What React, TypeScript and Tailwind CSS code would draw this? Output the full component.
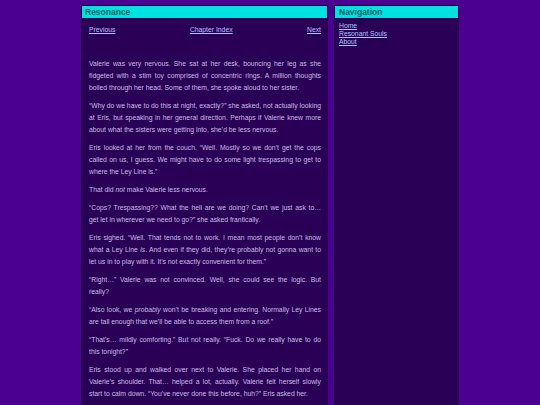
import React from "react";

const paras: React.ReactNode[] = [
  "Valerie was very nervous. She sat at her desk, bouncing her leg as she fidgeted with a stim toy comprised of concentric rings. A million thoughts boiled through her head. Some of them, she spoke aloud to her sister.",
  "“Why do we have to do this at night, exactly?” she asked, not actually looking at Eris, but speaking in her general direction. Perhaps if Valerie knew more about what the sisters were getting into, she’d be less nervous.",
  "Eris looked at her from the couch. “Well. Mostly so we don’t get the cops called on us, I guess. We might have to do some light trespassing to get to where the Ley Line is.”",
  <>That did <i>not</i> make Valerie less nervous.</>,
  "“Cops? Trespassing?? What the hell are we doing? Can’t we just ask to… get let in wherever we need to go?” she asked frantically.",
  <>Eris sighed. “Well. That tends not to work. I mean most people don’t know what a Ley Line <i>is</i>. And even if they did, they’re probably not gonna want to let us in to play with it. It’s not exactly convenient for them.”</>,
  "“Right…” Valerie was not convinced. Well, she could see the logic. But really?",
  <>“Also look, we <i>probably</i> won’t be breaking and entering. Normally Ley Lines are tall enough that we’ll be able to access them from a roof.”</>,
  "“That’s… mildly comforting.” But not really. “Fuck. Do we really have to do this tonight?”",
  "Eris stood up and walked over next to Valerie. She placed her hand on Valerie’s shoulder. That… helped a lot, actually. Valerie felt herself slowly start to calm down. “You’ve never done this before, huh?” Eris asked her.",
  "“No. Sorry…” Was she fucking things up for her younger sister?",
];

export default function App() {
  return (
    <div
      className="h-[405px] overflow-hidden bg-[#4b0092] flex justify-center items-start gap-[6px] pt-[5px]"
      style={{ fontFamily: '"Liberation Sans", Arial, sans-serif' }}
    >
      <div className="w-[247px] min-h-[420px] bg-[#2a0056] border border-[#220048]">
        <div className="h-[12px] bg-[#00e1e1] pl-[3px] text-[8.5px] leading-[12px] font-bold text-[#00615e]">
          Resonance
        </div>
        <div className="flex justify-between pl-[7px] pr-[6px] mt-[8px] text-[6.8px] leading-[8px]">
          <a className="underline text-[#aec2ff]">Previous</a>
          <a className="underline text-[#aec2ff]">Chapter Index</a>
          <a className="underline text-[#aec2ff]">Next</a>
        </div>
        <div className="pl-[7px] pr-[6px] pt-[24px] text-[6.8px] leading-[12px] text-[#cbbbe9] text-justify">
          {paras.map((p, i) => (
            <p key={i} className="mb-[6px]">
              {p}
            </p>
          ))}
        </div>
      </div>
      <div className="w-[125px] min-h-[420px] bg-[#2a0056] border border-[#220048]">
        <div className="h-[12px] bg-[#00e1e1] pl-[4px] text-[8.5px] leading-[12px] font-bold text-[#00615e]">
          Navigation
        </div>
        <div className="flex flex-col pl-[4px] pt-[4px] text-[6.8px] leading-[7.8px]">
          <a className="underline text-[#aec2ff]">Home</a>
          <a className="underline text-[#aec2ff]">Resonant Souls</a>
          <a className="underline text-[#aec2ff]">About</a>
        </div>
      </div>
    </div>
  );
}
